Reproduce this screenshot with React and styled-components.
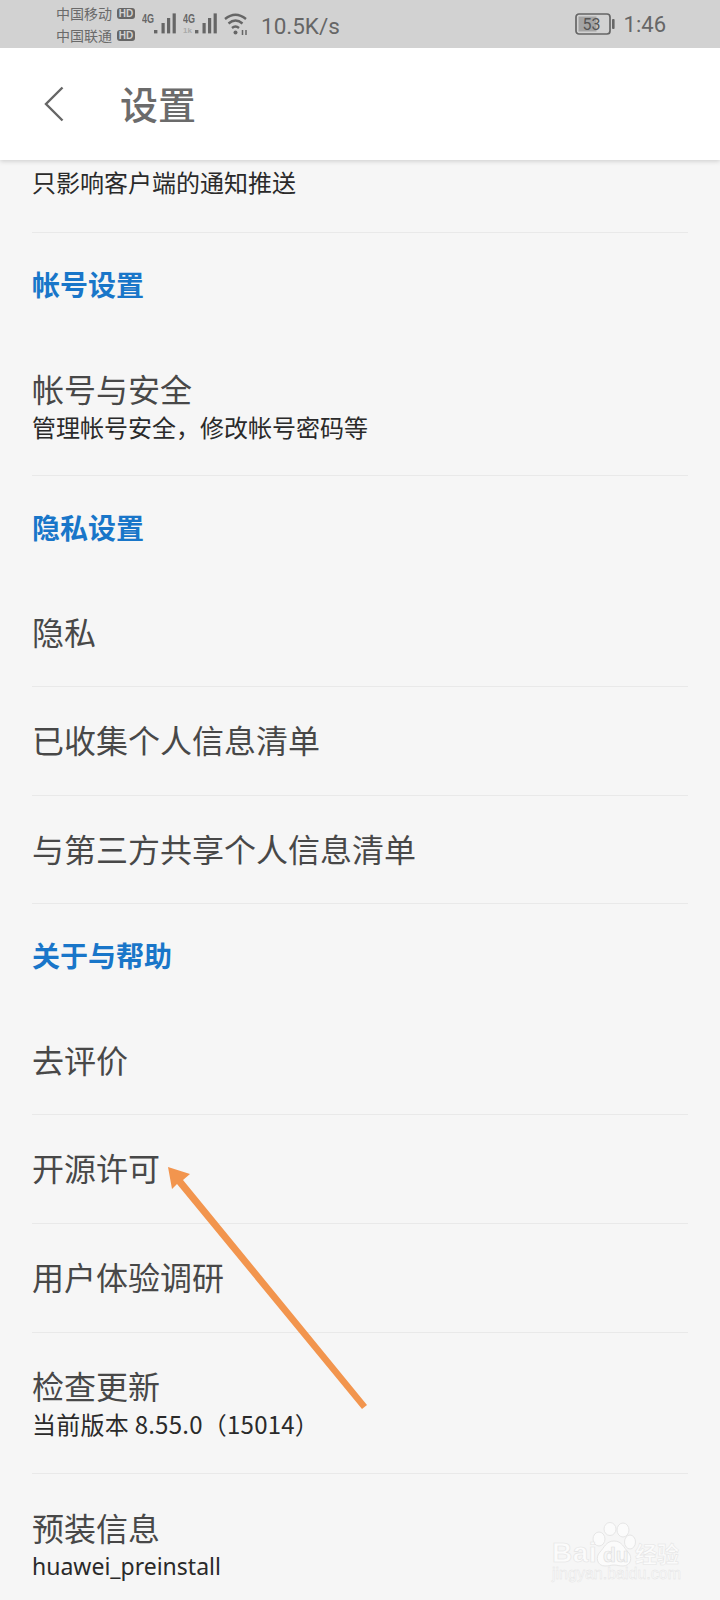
import React from "react";
import styled, { createGlobalStyle } from "styled-components";

const Global = createGlobalStyle`
  html, body { margin: 0; padding: 0; background: #f5f5f5; }
  body { font-family: "Noto Sans CJK SC", "Noto Sans", sans-serif; }
`;
const Screen = styled.div`
  position: relative; width: 720px; height: 1600px; overflow: hidden; background: #f6f6f6;
`;
const StatusBar = styled.div`
  position: relative; z-index: 3; height: 48px; box-sizing: border-box; background: #d2d2d2; display: flex; align-items: center;
  padding: 0 54px 0 56px; color: #6a6a6a;
`;
const Carriers = styled.div`
  display: flex; flex-direction: column; gap: 7px; font-size: 14px; line-height: 15px; flex: none;
`;
const Carrier = styled.div`display: flex; align-items: center; gap: 5px; white-space: nowrap;`;
const HdBadge = styled.span`
  width: 18px; height: 11px; border-radius: 3px; background: #666; color: #d2d2d2;
  font: 700 10px/11px "Liberation Sans", sans-serif; text-align: center; flex: none;
`;
const Signals = styled.div`display: flex; align-items: center; gap: 7px; margin-left: 7px;`;
const Speed = styled.div`
  font: 400 22.5px/1 Roboto, sans-serif; margin: 4px 0 0 13px; color: #666;
`;
const Right = styled.div`display: flex; align-items: center; margin-left: auto; gap: 9px;`;
const Clock = styled.div`font: 400 22px/1 Roboto, sans-serif; color: #666; margin-top: 2px;`;
const Header = styled.header`
  position: relative; z-index: 2; height: 112px; background: #fff; display: flex; align-items: center;
  box-shadow: 0 1px 5px rgba(0,0,0,.18);
`;
const Back = styled.svg`width: 20px; height: 36px; margin-left: 44px; flex: none;`;
const Title = styled.h1`
  margin: -2px 0 0 56px; font-size: 38px; font-weight: 500; color: #6b6b6b; line-height: 1;
`;
const List = styled.div`margin-top: -40px; padding: 0 32px 0 32px;`;
const Row = styled.div`
  height: ${p => p.$h}px; box-sizing: border-box; display: flex; flex-direction: column; justify-content: center;
  border-bottom: ${p => p.$last ? "none" : "1px solid #e9e9e9"};
  padding-bottom: ${p => p.$pb ?? 4}px;
`;
const LeadRow = styled(Row)`justify-content: flex-end;`;
const ItemTitle = styled.div`font-size: 32px; line-height: 44px; color: #484848; white-space: nowrap;`;
const LeadTitle = styled(ItemTitle)`margin-bottom: 1px;`;
const ItemSub = styled.div`
  margin-top: 2px; font-size: ${p => p.$latin ? 23 : 24}px; line-height: 30px; color: #2a2a2a;
  letter-spacing: ${p => p.$track || 0}px;
  font-family: ${p => p.$latin ? '"Noto Sans", sans-serif' : 'inherit'};
`;
const Section = styled.div`
  height: ${p => p.$h}px; box-sizing: border-box; display: flex; align-items: center; font-size: 28px; font-weight: 700;
  color: #1976c9; padding-bottom: ${p => p.$pb || 0}px;
`;
const ArrowLayer = styled.svg`position: absolute; left: 0; top: 0; pointer-events: none;`;
const Mark = styled.div`
  position: absolute; left: 552px; top: 1522px; width: 140px; height: 62px;
  font-family: "Liberation Sans", sans-serif; color: #fbfbfb;
`;
const MarkPaw = styled.svg`position: absolute; left: 0; top: 0;`;
const MarkBrand = styled.div`
  position: absolute; left: 0; top: 17px; font-size: 28px; font-weight: 700; line-height: 28px;
  -webkit-text-stroke: .6px #e4e4e4; letter-spacing: .5px;
`;
const MarkDu = styled.div`
  position: absolute; left: 51px; top: 21px; font-size: 21px; font-weight: 700; line-height: 24px; color: #f6f6f6;
  -webkit-text-stroke: .6px #dedede;
`;
const MarkCn = styled.div`
  position: absolute; left: 83px; top: 16px; font: 700 22px/28px "Noto Sans CJK SC", sans-serif;
  -webkit-text-stroke: .5px #e4e4e4;
`;
const MarkSite = styled.div`
  position: absolute; left: 0; top: 43px; font-size: 16px; line-height: 18px; white-space: nowrap;
  -webkit-text-stroke: .4px #e2e2e2;
`;

const Sig = ({ dim }) => (
  <svg width="34" height="24" viewBox="0 0 34 24">
    <text x="0" y="11" fontSize="13" fontWeight="700" fontFamily="Liberation Sans" fill="#666" textLength="12" lengthAdjust="spacingAndGlyphs">4G</text>
    {dim && <text x="0" y="21" fontSize="8" fontWeight="700" fontFamily="Liberation Sans" fill="#aaa">1k</text>}
    <rect x="12" y="18" width="3.4" height="3.4" fill="#666" />
    <rect x="19.5" y="11" width="3.2" height="10.4" fill="#666" />
    <rect x="25" y="6" width="3.2" height="15.4" fill="#666" />
    <rect x="30.6" y="1.4" width="3.2" height="20" fill="#666" />
  </svg>
);
const Wifi = () => (
  <svg width="24" height="24" viewBox="0 0 24 24" fill="none" stroke="#666" strokeWidth="2.4">
    <path d="M1 7 Q11.5 -1.5 22 7" />
    <path d="M4.5 11.5 Q11.5 5.5 18.5 11.5" />
    <path d="M8 16 Q11.5 13 15 16" />
    <circle cx="11.5" cy="20.5" r="2" fill="#666" stroke="none" />
    <path d="M18.5 18v5M22 18v5" strokeWidth="1.5" />
  </svg>
);
const Battery = () => (
  <svg width="40" height="22" viewBox="0 0 40 22">
    <rect x="1" y="1" width="34" height="20" rx="3" fill="none" stroke="#666" strokeWidth="1.7" />
    <rect x="3.5" y="3.5" width="18" height="15" fill="#a4a4a4" />
    <text x="16.5" y="17" fontSize="16" fontFamily="Roboto" textAnchor="middle" fill="#555">53</text>
    <rect x="37" y="6" width="2.6" height="10" rx="1" fill="#666" />
  </svg>
);

const rows = [
  { k: "sec", t: "帐号设置", h: 108, pb: 7 },
  { k: "item", t: "帐号与安全", h: 135, sub: "管理帐号安全，修改帐号密码等", pb: 8 },
  { k: "sec", t: "隐私设置", h: 103, pb: 2 },
  { k: "item", t: "隐私", h: 108 },
  { k: "item", t: "已收集个人信息清单", h: 109 },
  { k: "item", t: "与第三方共享个人信息清单", h: 108 },
  { k: "sec", t: "关于与帮助", h: 103, pb: 2 },
  { k: "item", t: "去评价", h: 108 },
  { k: "item", t: "开源许可", h: 109 },
  { k: "item", t: "用户体验调研", h: 109 },
  { k: "item", t: "检查更新", h: 141, sub: "当前版本 8.55.0（15014）", track: 0.25 },
  { k: "item", t: "预装信息", h: 142, sub: "huawei_preinstall", latin: true, last: true },
];

export default function App() {
  return (
    <Screen>
      <Global />
      <StatusBar>
        <Carriers>
          <Carrier>中国移动<HdBadge>HD</HdBadge></Carrier>
          <Carrier>中国联通<HdBadge>HD</HdBadge></Carrier>
        </Carriers>
        <Signals><Sig /><Sig dim /><Wifi /></Signals>
        <Speed>10.5K/s</Speed>
        <Right><Battery /><Clock>1:46</Clock></Right>
      </StatusBar>
      <Header>
        <Back viewBox="0 0 20 36" fill="none" stroke="#666" strokeWidth="2.4"><path d="M18.5 1.5 L2 18 L18.5 34.5" /></Back>
        <Title>设置</Title>
      </Header>
      <List>
        <LeadRow $h={113} $pb={35}>
          <LeadTitle>接收新消息通知</LeadTitle>
          <ItemSub>只影响客户端的通知推送</ItemSub>
        </LeadRow>
        {rows.map((r) =>
          r.k === "sec" ? <Section key={r.t} $h={r.h} $pb={r.pb}>{r.t}</Section> : (
            <Row key={r.t} $h={r.h} $pb={r.pb} $last={r.last}>
              <ItemTitle>{r.t}</ItemTitle>
              {r.sub && <ItemSub $latin={r.latin} $track={r.track}>{r.sub}</ItemSub>}
            </Row>
          )
        )}
      </List>
      <ArrowLayer width="720" height="1600" viewBox="0 0 720 1600">
        <path d="M168 1167 L190 1174 L183 1180 L367 1405 L362 1409 L177 1184 L172 1189 Z" fill="#f2954e" />
      </ArrowLayer>
      <Mark>
        <MarkPaw width="140" height="62" viewBox="0 0 140 62">
          <g fill="#fbfbfb" stroke="#e6e6e6" strokeWidth="1">
            <ellipse cx="47" cy="17" rx="6" ry="7" />
            <ellipse cx="58" cy="7" rx="6" ry="6.5" />
            <ellipse cx="71" cy="8" rx="6" ry="7" />
            <ellipse cx="78" cy="20" rx="5.5" ry="7" />
            <path d="M62 19c8 0 10 7 14 11 5 5 3 14-5 14-4 0-6-1-9-1s-5 1-9 1c-8 0-10-9-5-14 4-4 6-11 14-11z" />
          </g>
        </MarkPaw>
        <MarkBrand>Bai</MarkBrand>
        <MarkDu>du</MarkDu>
        <MarkCn>经验</MarkCn>
        <MarkSite>jingyan.baidu.com</MarkSite>
      </Mark>
    </Screen>
  );
}
